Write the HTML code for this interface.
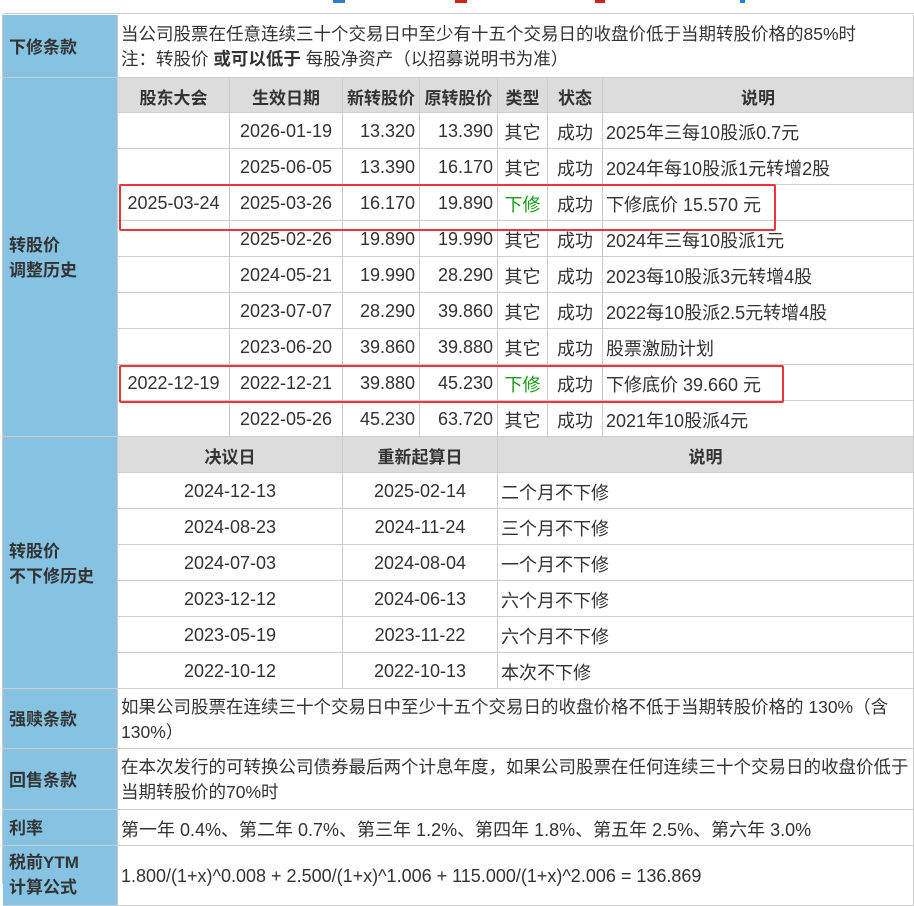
<!DOCTYPE html><html><head><meta charset="utf-8"><style>
body{margin:0;width:914px;height:884px;overflow:hidden;background:#fff;font-family:"Liberation Sans","Noto Sans CJK SC",sans-serif;color:#333;position:relative}
.c{position:absolute;box-sizing:border-box;border-right:1px solid #ccc;border-bottom:1px solid #ccc;display:flex;align-items:center;font-size:18px;white-space:nowrap;overflow:hidden;padding-top:2px}
.b{background:#86c3e3;font-weight:bold;padding-left:6px;white-space:normal;line-height:25px;font-size:17px}
.h{background:#dcdcdc;font-weight:bold;justify-content:center;font-size:17px}
.m{justify-content:center}.r{justify-content:flex-end;padding-right:4px}.l{padding-left:3px}
.w{white-space:normal;line-height:25px;padding-left:3px;align-items:center;font-size:17.5px}
.g{color:#1a9a1a}
.box{position:absolute;border:2px solid #e8363a;border-radius:2px;box-sizing:border-box}
</style></head><body>
<div style="position:absolute;left:333px;top:0;width:12px;height:3px;background:#2a7fd4"></div>
<div style="position:absolute;left:455px;top:0;width:12px;height:3px;background:#d02020"></div>
<div style="position:absolute;left:595px;top:0;width:10px;height:3px;background:#d02020"></div>
<div style="position:absolute;left:740px;top:0;width:5px;height:3px;background:#2a7fd4"></div>
<div style="position:absolute;left:3px;top:13px;width:911px;height:1px;background:#ccc"></div>
<div style="position:absolute;left:2px;top:14px;width:1px;height:870px;background:#ccc"></div>

<div class="c b" style="left:3px;top:15px;width:115px;height:63px"><span>下修条款</span></div>
<div class="c w" style="left:118px;top:15px;width:796px;height:63px"><span>当公司股票在任意连续三十个交易日中至少有十五个交易日的收盘价低于当期转股价格的85%时<br>注：转股价 <b>或可以低于</b> 每股净资产（以招募说明书为准）</span></div>

<div class="c b" style="left:3px;top:78px;width:115px;height:359px"><span>转股价<br>调整历史</span></div>
<div class="c h" style="left:118px;top:78px;width:112px;height:35px">股东大会</div>
<div class="c h" style="left:230px;top:78px;width:113px;height:35px">生效日期</div>
<div class="c h" style="left:343px;top:78px;width:77px;height:35px">新转股价</div>
<div class="c h" style="left:420px;top:78px;width:78px;height:35px">原转股价</div>
<div class="c h" style="left:498px;top:78px;width:50px;height:35px">类型</div>
<div class="c h" style="left:548px;top:78px;width:55px;height:35px">状态</div>
<div class="c h" style="left:603px;top:78px;width:311px;height:35px">说明</div>

<div class="c m" style="left:118px;top:113px;width:112px;height:36px"></div><div class="c m" style="left:230px;top:113px;width:113px;height:36px">2026-01-19</div><div class="c r" style="left:343px;top:113px;width:77px;height:36px">13.320</div><div class="c r" style="left:420px;top:113px;width:78px;height:36px">13.390</div><div class="c m" style="left:498px;top:113px;width:50px;height:36px">其它</div><div class="c m" style="left:548px;top:113px;width:55px;height:36px">成功</div><div class="c l" style="left:603px;top:113px;width:311px;height:36px">2025年三每10股派0.7元</div>
<div class="c m" style="left:118px;top:149px;width:112px;height:36px"></div><div class="c m" style="left:230px;top:149px;width:113px;height:36px">2025-06-05</div><div class="c r" style="left:343px;top:149px;width:77px;height:36px">13.390</div><div class="c r" style="left:420px;top:149px;width:78px;height:36px">16.170</div><div class="c m" style="left:498px;top:149px;width:50px;height:36px">其它</div><div class="c m" style="left:548px;top:149px;width:55px;height:36px">成功</div><div class="c l" style="left:603px;top:149px;width:311px;height:36px">2024年每10股派1元转增2股</div>
<div class="c m" style="left:118px;top:185px;width:112px;height:36px">2025-03-24</div><div class="c m" style="left:230px;top:185px;width:113px;height:36px">2025-03-26</div><div class="c r" style="left:343px;top:185px;width:77px;height:36px">16.170</div><div class="c r" style="left:420px;top:185px;width:78px;height:36px">19.890</div><div class="c m g" style="left:498px;top:185px;width:50px;height:36px">下修</div><div class="c m" style="left:548px;top:185px;width:55px;height:36px">成功</div><div class="c l" style="left:603px;top:185px;width:311px;height:36px">下修底价 15.570 元</div>
<div class="c m" style="left:118px;top:221px;width:112px;height:36px"></div><div class="c m" style="left:230px;top:221px;width:113px;height:36px">2025-02-26</div><div class="c r" style="left:343px;top:221px;width:77px;height:36px">19.890</div><div class="c r" style="left:420px;top:221px;width:78px;height:36px">19.990</div><div class="c m" style="left:498px;top:221px;width:50px;height:36px">其它</div><div class="c m" style="left:548px;top:221px;width:55px;height:36px">成功</div><div class="c l" style="left:603px;top:221px;width:311px;height:36px">2024年三每10股派1元</div>
<div class="c m" style="left:118px;top:257px;width:112px;height:36px"></div><div class="c m" style="left:230px;top:257px;width:113px;height:36px">2024-05-21</div><div class="c r" style="left:343px;top:257px;width:77px;height:36px">19.990</div><div class="c r" style="left:420px;top:257px;width:78px;height:36px">28.290</div><div class="c m" style="left:498px;top:257px;width:50px;height:36px">其它</div><div class="c m" style="left:548px;top:257px;width:55px;height:36px">成功</div><div class="c l" style="left:603px;top:257px;width:311px;height:36px">2023每10股派3元转增4股</div>
<div class="c m" style="left:118px;top:293px;width:112px;height:36px"></div><div class="c m" style="left:230px;top:293px;width:113px;height:36px">2023-07-07</div><div class="c r" style="left:343px;top:293px;width:77px;height:36px">28.290</div><div class="c r" style="left:420px;top:293px;width:78px;height:36px">39.860</div><div class="c m" style="left:498px;top:293px;width:50px;height:36px">其它</div><div class="c m" style="left:548px;top:293px;width:55px;height:36px">成功</div><div class="c l" style="left:603px;top:293px;width:311px;height:36px">2022每10股派2.5元转增4股</div>
<div class="c m" style="left:118px;top:329px;width:112px;height:36px"></div><div class="c m" style="left:230px;top:329px;width:113px;height:36px">2023-06-20</div><div class="c r" style="left:343px;top:329px;width:77px;height:36px">39.860</div><div class="c r" style="left:420px;top:329px;width:78px;height:36px">39.880</div><div class="c m" style="left:498px;top:329px;width:50px;height:36px">其它</div><div class="c m" style="left:548px;top:329px;width:55px;height:36px">成功</div><div class="c l" style="left:603px;top:329px;width:311px;height:36px">股票激励计划</div>
<div class="c m" style="left:118px;top:365px;width:112px;height:36px">2022-12-19</div><div class="c m" style="left:230px;top:365px;width:113px;height:36px">2022-12-21</div><div class="c r" style="left:343px;top:365px;width:77px;height:36px">39.880</div><div class="c r" style="left:420px;top:365px;width:78px;height:36px">45.230</div><div class="c m g" style="left:498px;top:365px;width:50px;height:36px">下修</div><div class="c m" style="left:548px;top:365px;width:55px;height:36px">成功</div><div class="c l" style="left:603px;top:365px;width:311px;height:36px">下修底价 39.660 元</div>
<div class="c m" style="left:118px;top:401px;width:112px;height:36px"></div><div class="c m" style="left:230px;top:401px;width:113px;height:36px">2022-05-26</div><div class="c r" style="left:343px;top:401px;width:77px;height:36px">45.230</div><div class="c r" style="left:420px;top:401px;width:78px;height:36px">63.720</div><div class="c m" style="left:498px;top:401px;width:50px;height:36px">其它</div><div class="c m" style="left:548px;top:401px;width:55px;height:36px">成功</div><div class="c l" style="left:603px;top:401px;width:311px;height:36px">2021年10股派4元</div>

<div class="box" style="left:119px;top:184px;width:657px;height:47px"></div>
<div class="box" style="left:119px;top:365px;width:665px;height:38px"></div>

<div class="c b" style="left:3px;top:437px;width:115px;height:252px"><span>转股价<br>不下修历史</span></div>
<div class="c h" style="left:118px;top:437px;width:225px;height:36px">决议日</div>
<div class="c h" style="left:343px;top:437px;width:155px;height:36px">重新起算日</div>
<div class="c h" style="left:498px;top:437px;width:416px;height:36px">说明</div>
<div class="c m" style="left:118px;top:473px;width:225px;height:36px">2024-12-13</div><div class="c m" style="left:343px;top:473px;width:155px;height:36px">2025-02-14</div><div class="c l" style="left:498px;top:473px;width:416px;height:36px">二个月不下修</div>
<div class="c m" style="left:118px;top:509px;width:225px;height:36px">2024-08-23</div><div class="c m" style="left:343px;top:509px;width:155px;height:36px">2024-11-24</div><div class="c l" style="left:498px;top:509px;width:416px;height:36px">三个月不下修</div>
<div class="c m" style="left:118px;top:545px;width:225px;height:36px">2024-07-03</div><div class="c m" style="left:343px;top:545px;width:155px;height:36px">2024-08-04</div><div class="c l" style="left:498px;top:545px;width:416px;height:36px">一个月不下修</div>
<div class="c m" style="left:118px;top:581px;width:225px;height:36px">2023-12-12</div><div class="c m" style="left:343px;top:581px;width:155px;height:36px">2024-06-13</div><div class="c l" style="left:498px;top:581px;width:416px;height:36px">六个月不下修</div>
<div class="c m" style="left:118px;top:617px;width:225px;height:36px">2023-05-19</div><div class="c m" style="left:343px;top:617px;width:155px;height:36px">2023-11-22</div><div class="c l" style="left:498px;top:617px;width:416px;height:36px">六个月不下修</div>
<div class="c m" style="left:118px;top:653px;width:225px;height:36px">2022-10-12</div><div class="c m" style="left:343px;top:653px;width:155px;height:36px">2022-10-13</div><div class="c l" style="left:498px;top:653px;width:416px;height:36px">本次不下修</div>

<div class="c b" style="left:3px;top:689px;width:115px;height:60px"><span>强赎条款</span></div>
<div class="c w" style="left:118px;top:689px;width:796px;height:60px"><span>如果公司股票在连续三十个交易日中至少十五个交易日的收盘价格不低于当期转股价格的 130%（含130%）</span></div>
<div class="c b" style="left:3px;top:749px;width:115px;height:61px"><span>回售条款</span></div>
<div class="c w" style="left:118px;top:749px;width:796px;height:61px"><span>在本次发行的可转换公司债券最后两个计息年度，如果公司股票在任何连续三十个交易日的收盘价低于当期转股价的70%时</span></div>
<div class="c b" style="left:3px;top:810px;width:115px;height:36px"><span>利率</span></div>
<div class="c l" style="left:118px;top:810px;width:796px;height:36px">第一年 0.4%、第二年 0.7%、第三年 1.2%、第四年 1.8%、第五年 2.5%、第六年 3.0%</div>
<div class="c b" style="left:3px;top:846px;width:115px;height:60px;align-items:flex-start;padding-top:4px"><span>税前YTM<br>计算公式</span></div>
<div class="c l" style="left:118px;top:846px;width:796px;height:60px;align-items:flex-start;padding-top:20px">1.800/(1+x)^0.008 + 2.500/(1+x)^1.006 + 115.000/(1+x)^2.006 = 136.869</div>
</body></html>
